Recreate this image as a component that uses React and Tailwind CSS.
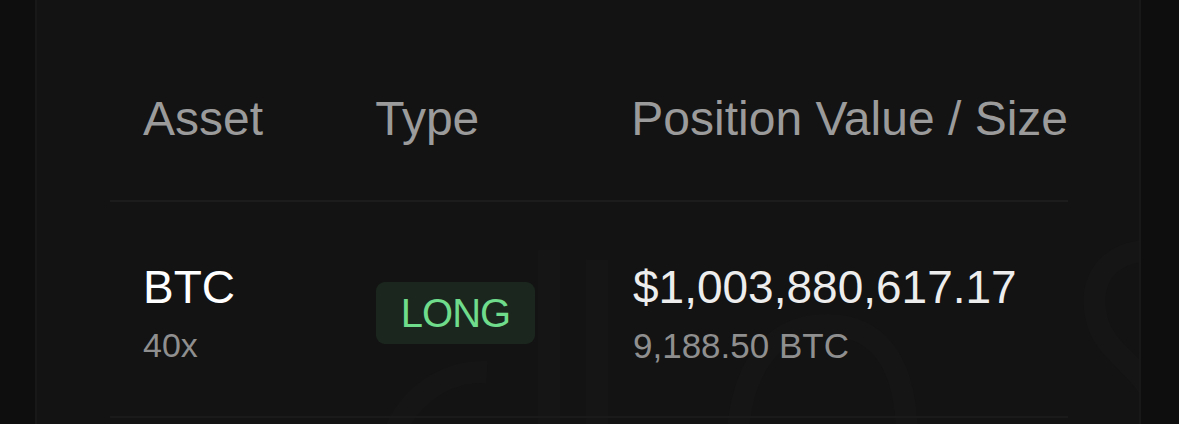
import React from "react";

const positions = [
	{
		asset: "BTC",
		leverage: "40x",
		type: "LONG",
		value: "$1,003,880,617.17",
		size: "9,188.50 BTC",
	},
];

// very faint logo mark that sits behind the table
const Watermark = () => (
	<svg
		className="absolute left-0 top-0"
		width="1106"
		height="424"
		viewBox="0 0 1106 424"
		fill="none"
		stroke="#151515"
		strokeWidth="22"
	>
		<path d="M355 440 C 370 395, 410 370, 450 372" />
		<path d="M512 250 L 512 440" />
		<path d="M560 260 L 560 440" />
		<path d="M700 440 C 705 360, 740 325, 790 325 C 840 325, 870 360, 870 440" />
		<path d="M1120 250 C 1070 250, 1050 280, 1060 320 C 1070 360, 1120 370, 1120 420" />
	</svg>
);

const App = () => {
	return (
		<div
			className="w-[1179px] h-[424px] overflow-hidden bg-[#0e0e0e] flex"
			style={{ fontFamily: '"Liberation Sans", Arial, sans-serif' }}
		>
			<div className="relative ml-[35px] w-[1106px] h-full bg-[#131313] border-x-2 border-[#181818] overflow-hidden">
				<Watermark />

				<div className="relative ml-[73px] w-[958px]">
					{/* header */}
					<div className="flex items-end h-[202px] border-b-2 border-[#1c1c1c] pb-[57px] text-[48px] leading-none text-[#9b9b9b]">
						<div className="w-[266px] pl-[33px]">Asset</div>
						<div className="w-[257px]">Type</div>
						<div className="flex-1 whitespace-nowrap">Position Value / Size</div>
					</div>

					{/* rows */}
					{positions.map((p) => (
						<div
							key={p.asset}
							className="flex items-center h-[216px] border-b-2 border-[#1a1a1a] pt-[8px]"
						>
							<div className="w-[266px] pl-[33px] flex flex-col gap-[18px]">
								<span className="text-[46px] leading-none text-white">{p.asset}</span>
								<span className="text-[34px] leading-none text-[#8f8f8f]">{p.leverage}</span>
							</div>
							<div className="w-[257px]">
								<span className="inline-flex items-center justify-center w-[159px] h-[62px] rounded-[9px] bg-[#1b271e] text-[40px] leading-none text-[#6fdc8c] tracking-tight">
									{p.type}
								</span>
							</div>
							<div className="flex-1 flex flex-col gap-[18px]">
								<span className="text-[46px] leading-none text-[#ededed]">{p.value}</span>
								<span className="text-[35px] leading-none text-[#8f8f8f]">{p.size}</span>
							</div>
						</div>
					))}
				</div>
			</div>
		</div>
	);
};

export default App;
